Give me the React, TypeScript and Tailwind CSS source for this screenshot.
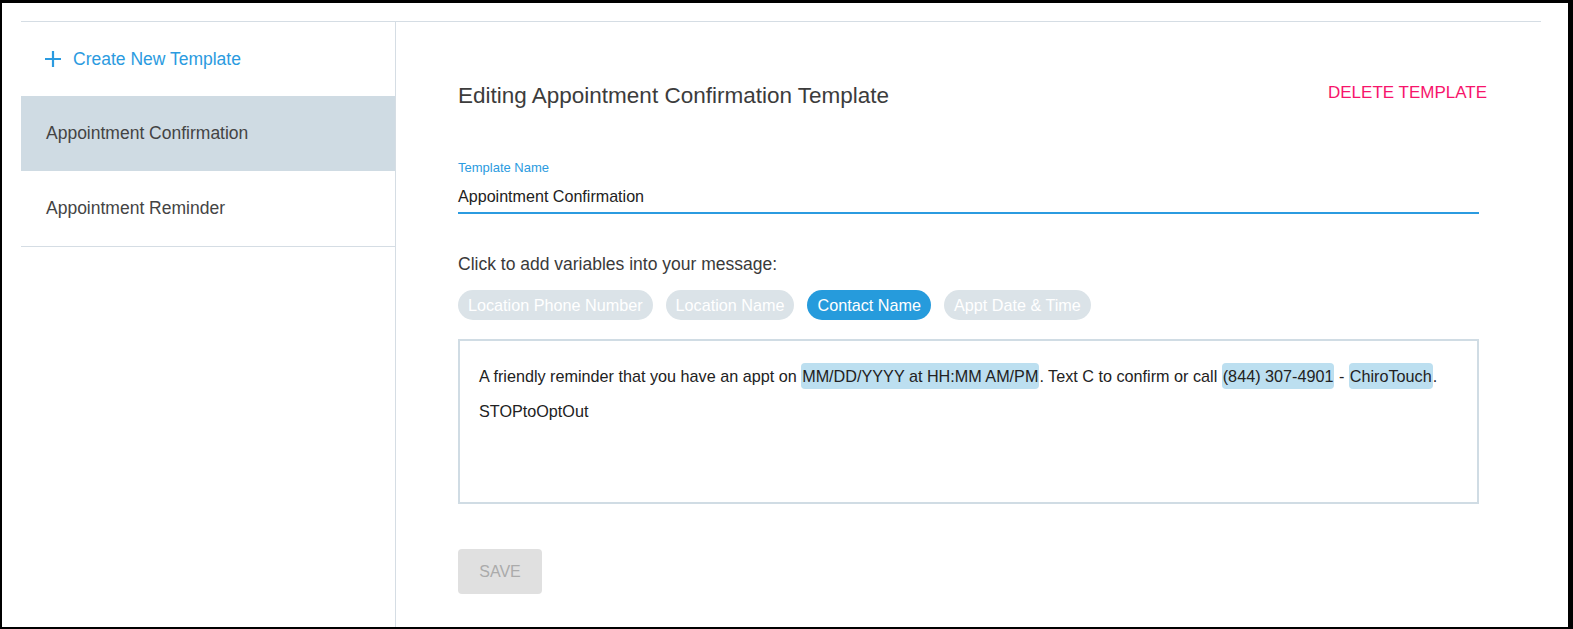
const sidebarItems = [
  { label: 'Appointment Confirmation', active: true },
  { label: 'Appointment Reminder', active: false },
];

const variables = [
  { label: 'Location Phone Number', active: false },
  { label: 'Location Name', active: false },
  { label: 'Contact Name', active: true },
  { label: 'Appt Date & Time', active: false },
];

function Tag({ children }: { children: React.ReactNode }) {
  return <span className="inline-block rounded-[4px] bg-[#bcdff0] px-[1px] leading-[26px]">{children}</span>;
}

export default function App() {
  return (
    <div
      className="box-border h-[629px] w-[1573px] border-t-[3px] border-r-[5px] border-b-[2px] border-l-[2px] border-black bg-white pt-[18px] pr-[27px] pl-[19px]"
      style={{ fontFamily: '"Liberation Sans", Arial, sans-serif' }}
    >
      <div className="flex h-full border-t border-[#d5dde4]">
        <aside className="box-border w-[375px] shrink-0 border-r border-[#d5dde4]">
          <button className="flex h-[74px] w-full items-center gap-[11px] pl-[23px] text-[17.5px] text-[#2b9be0]">
            <svg width="18" height="18" viewBox="0 0 18 18" fill="none" stroke="#2b9be0" strokeWidth="2.2">
              <path d="M9 1v16M1 9h16" />
            </svg>
            <span>Create New Template</span>
          </button>
          <div className="border-b border-[#d5dde4]">
            {sidebarItems.map((item) => (
              <div
                key={item.label}
                className={`flex h-[75px] items-center pl-[25px] text-[17.5px] text-[#444] ${item.active ? 'bg-[#cfdbe3]' : ''}`}
              >
                {item.label}
              </div>
            ))}
          </div>
        </aside>

        <main className="flex-1 pt-[61px] pr-[62px] pl-[62px]">
          <div className="flex items-start justify-between">
            <h1 className="text-[22.5px] leading-[26px] text-[#3c3c3c]">Editing Appointment Confirmation Template</h1>
            <button className="-mr-[8px] text-[17px] leading-[20px] text-[#f7146b]">DELETE TEMPLATE</button>
          </div>

          <label className="mt-[51px] block text-[13px] leading-[16px] text-[#2b9be0]">Template Name</label>
          <div className="mt-[10px] border-b-2 border-[#2b9be0] pb-[6px] text-[16.1px] leading-[20px] text-[#222]">
            Appointment Confirmation
          </div>

          <p className="mt-[40px] text-[17.5px] leading-[20px] text-[#3a3a3a]">Click to add variables into your message:</p>
          <div className="mt-[16px] flex gap-[13px]">
            {variables.map((v) => (
              <span
                key={v.label}
                className={`flex h-[30px] items-center rounded-full px-[10px] text-[16.2px] text-white ${v.active ? 'bg-[#269bdc]' : 'bg-[#dbe3e8]'}`}
              >
                {v.label}
              </span>
            ))}
          </div>

          <div className="mt-[19px] box-border h-[165px] border-2 border-[#d0dce4] pt-[18px] pl-[19px] text-[16.2px] leading-[35px] text-[#222]">
            <div>
              A friendly reminder that you have an appt on <Tag>MM/DD/YYYY at HH:MM AM/PM</Tag>. Text C to confirm or call{' '}
              <Tag>(844) 307-4901</Tag> - <Tag>ChiroTouch</Tag>.
            </div>
            <div>STOPtoOptOut</div>
          </div>

          <button className="mt-[45px] h-[45px] w-[84px] rounded-[4px] bg-[#e0e0e0] text-[16px] text-[#ababab]">SAVE</button>
        </main>
      </div>
    </div>
  );
}
